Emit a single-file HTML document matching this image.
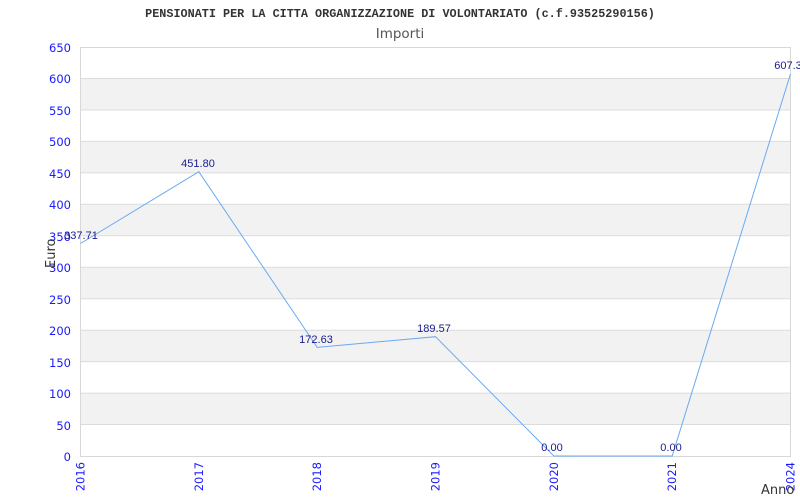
<!DOCTYPE html>
<html><head><meta charset="utf-8"><style>html,body{margin:0;padding:0;background:#fff}svg{display:block}</style></head>
<body>
<svg width="800" height="500" xmlns="http://www.w3.org/2000/svg">
<rect width="800" height="500" fill="#fff"/>
<g fill="#f2f2f2">
<rect x="80.5" y="78.5" width="710" height="31.5"/>
<rect x="80.5" y="141.4" width="710" height="31.5"/>
<rect x="80.5" y="204.3" width="710" height="31.5"/>
<rect x="80.5" y="267.2" width="710" height="31.5"/>
<rect x="80.5" y="330.2" width="710" height="31.5"/>
<rect x="80.5" y="393.1" width="710" height="31.5"/>
</g>
<g stroke="#dcdcdc" stroke-width="1">
<line x1="80" y1="78.5" x2="790" y2="78.5"/><line x1="80" y1="110" x2="790" y2="110"/>
<line x1="80" y1="141.4" x2="790" y2="141.4"/><line x1="80" y1="172.9" x2="790" y2="172.9"/>
<line x1="80" y1="204.3" x2="790" y2="204.3"/><line x1="80" y1="235.8" x2="790" y2="235.8"/>
<line x1="80" y1="267.2" x2="790" y2="267.2"/><line x1="80" y1="298.7" x2="790" y2="298.7"/>
<line x1="80" y1="330.2" x2="790" y2="330.2"/><line x1="80" y1="361.6" x2="790" y2="361.6"/>
<line x1="80" y1="393.1" x2="790" y2="393.1"/><line x1="80" y1="424.5" x2="790" y2="424.5"/>
</g>
<rect x="80.5" y="47.5" width="710" height="409" fill="none" stroke="#d8d8d8"/>
<text x="400" y="17" text-anchor="middle" font-family="Liberation Mono, monospace" font-weight="bold" font-size="11.8" fill="#333">PENSIONATI PER LA CITTA ORGANIZZAZIONE DI VOLONTARIATO (c.f.93525290156)</text>
<text x="400" y="38" text-anchor="middle" font-family="DejaVu Sans, sans-serif" font-size="13.5" fill="#555">Importi</text>
<g font-family="DejaVu Sans, sans-serif" font-size="11.5" fill="#1a1aff" text-anchor="end">
<text x="71" y="52">650</text><text x="71" y="83">600</text><text x="71" y="115">550</text>
<text x="71" y="146">500</text><text x="71" y="178">450</text><text x="71" y="209">400</text>
<text x="71" y="241">350</text><text x="71" y="272">300</text><text x="71" y="304">250</text>
<text x="71" y="335">200</text><text x="71" y="367">150</text><text x="71" y="398">100</text>
<text x="71" y="430">50</text><text x="71" y="461">0</text>
</g>
<g font-family="DejaVu Sans, sans-serif" font-size="11.5" fill="#1a1aff" text-anchor="end">
<text transform="translate(84.5,462) rotate(-90)">2016</text>
<text transform="translate(202.8,462) rotate(-90)">2017</text>
<text transform="translate(321.2,462) rotate(-90)">2018</text>
<text transform="translate(439.5,462) rotate(-90)">2019</text>
<text transform="translate(557.8,462) rotate(-90)">2020</text>
<text transform="translate(676.2,462) rotate(-90)">2021</text>
<text transform="translate(794.5,462) rotate(-90)">2024</text>
</g>
<text transform="translate(55,268) rotate(-90)" font-family="DejaVu Sans, sans-serif" font-size="13" fill="#333">Euro</text>
<text x="761" y="494" font-family="DejaVu Sans, sans-serif" font-size="13" fill="#333">Anno</text>
<polyline fill="none" stroke="#6aaaf0" stroke-width="1" points="80.5,243.5 198.8,171.7 317.2,347.4 435.5,336.7 553.8,456 672.2,456 790.5,73.9"/>
<g font-family="Liberation Sans, sans-serif" font-size="11" fill="#1a1a90" text-anchor="middle">
<text x="81" y="239">337.71</text>
<text x="198" y="167">451.80</text>
<text x="316" y="343">172.63</text>
<text x="434" y="332">189.57</text>
<text x="552" y="451">0.00</text>
<text x="671" y="451">0.00</text>
<text x="788" y="69">607.3</text>
</g>
</svg>
</body></html>
